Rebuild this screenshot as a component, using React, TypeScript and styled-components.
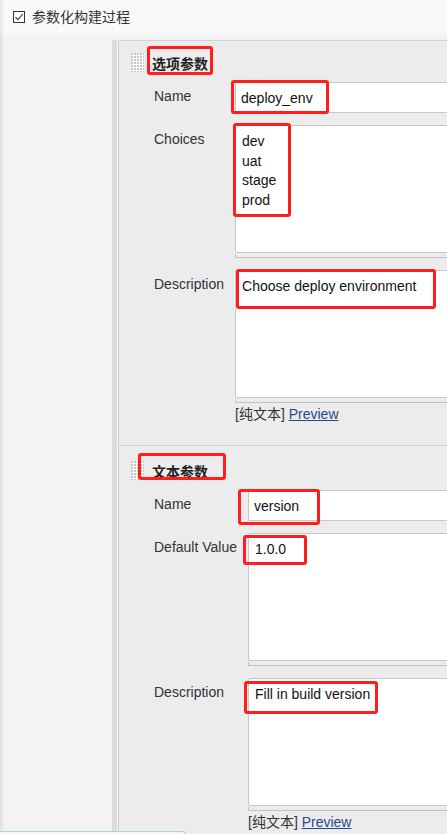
import React from "react";
import styled, { createGlobalStyle } from "styled-components";

const GlobalStyle = createGlobalStyle`
  html, body {
    margin: 0;
    padding: 0;
    overflow: hidden;
    background: #f3f3f3;
    font-family: "Liberation Sans", "Noto Sans CJK SC", Arial, sans-serif;
    font-size: 14px;
    color: #333;
  }
`;

const Page = styled.div`
  width: 447px;
  height: 834px;
  overflow: hidden;
  display: flex;
  flex-direction: column;
`;

const TopBar = styled.div`
  height: 33px;
  flex: none;
  display: flex;
  align-items: center;
  gap: 7px;
  background: #f9f9f9;
  border-left: 3px solid #ececec;
  box-sizing: border-box;
  padding-left: 10px;
`;

const CheckBox = styled.span`
  width: 12px;
  height: 12px;
  box-sizing: border-box;
  border: 1px solid #333;
  background: #fff;
  display: flex;
  align-items: center;
  justify-content: center;
`;

const TopLabel = styled.span`
  font-size: 14px;
  line-height: 16px;
  color: #333;
`;

const Body = styled.div`
  flex: 1;
  display: flex;
  min-height: 0;
`;

const Gutter = styled.div`
  width: 109px;
  flex: none;
  background: #f3f3f3;
  border-left: 3px solid #e4e4e4;
`;

const RightCol = styled.div`
  flex: 1;
  display: flex;
  padding-top: 7px;
  min-width: 0;
`;

const Bar = styled.div`
  width: 5px;
  flex: none;
  background: #dcdcdc;
  margin-right: 1px;
`;

const Panel = styled.div`
  flex: 1;
  background: #ececec;
  border-left: 1px solid #d2d2d2;
  box-shadow: -1px 0 0 #f4f4f4;
  min-width: 0;
`;

const Section = styled.div<{ $top: number; $bottom: number }>`
  position: relative;
  border-top: 1px solid #d2d2d2;
  padding: ${(p) => p.$top}px 0 ${(p) => p.$bottom}px 12px;
`;

const Header = styled.div`
  display: flex;
  align-items: center;
  gap: 8px;
  height: 19px;
`;

const DragHandle = styled.span`
  width: 13px;
  height: 19px;
  background-color: #fff;
  background-image: linear-gradient(90deg, transparent 2px, #fff 2px),
    linear-gradient(#c4c4c4 2px, #fff 2px);
  background-size: 3px 3px;
`;

const HeaderTitle = styled.span`
  font-weight: bold;
  font-size: 14px;
  color: #222;
`;

const FormGrid = styled.div`
  display: grid;
  grid-template-columns: max-content 400px;
  column-gap: 11px;
  row-gap: 12px;
  margin-top: 10px;
  padding-left: 23px;
`;

const Label = styled.div`
  padding-top: 6px;
  line-height: 17px;
  font-size: 14px;
  color: #333;
  white-space: nowrap;
`;

const TextInput = styled.input`
  display: block;
  box-sizing: border-box;
  width: 400px;
  height: 31px;
  border: 1px solid #c8c8c8;
  border-radius: 2px;
  padding: 0 5px;
  margin: 0;
  font-family: "Liberation Sans", Arial, sans-serif;
  font-size: 14px;
  color: #111;
  background: #fff;
  outline: none;
`;

const Field = styled.div`
  display: flex;
  flex-direction: column;
`;

const TextArea = styled.textarea`
  display: block;
  box-sizing: border-box;
  width: 400px;
  height: 128px;
  border: 1px solid #c8c8c8;
  border-radius: 2px;
  padding: 6px 6px;
  margin: 0;
  font-family: "Liberation Sans", Arial, sans-serif;
  font-size: 14px;
  line-height: 19.5px;
  color: #111;
  background: #fff;
  resize: none;
  overflow: hidden;
  outline: none;
`;

const ResizeHandle = styled.div`
  margin-top: 1px;
  height: 3px;
  border-left: 1px solid #c2c2c2;
  border-bottom: 1px solid #c2c2c2;
`;

const PreviewLine = styled.div`
  margin-top: 3px;
  line-height: 16px;
  font-size: 14px;
  color: #333;
  white-space: nowrap;
`;

const PreviewLink = styled.a`
  color: #1f4a8a;
  text-decoration: underline;
`;

const Highlight = styled.span<{ $x: number; $y: number; $w: number; $h: number }>`
  position: absolute;
  left: ${(p) => p.$x}px;
  top: ${(p) => p.$y}px;
  width: ${(p) => p.$w}px;
  height: ${(p) => p.$h}px;
  box-sizing: border-box;
  border: 3px solid #ff1d1d;
  border-radius: 3px;
  pointer-events: none;
`;

const Toast = styled.div`
  position: fixed;
  left: 0;
  bottom: -6px;
  width: 185px;
  height: 8px;
  background: #f2f8f4;
  border-top: 1px solid #a9d9bf;
  border-right: 1px solid #a9d9bf;
  border-top-right-radius: 4px;
`;

type Box = [number, number, number, number];

function Mark({ box }: { box: Box }) {
  const [x, y, w, h] = box;
  return <Highlight $x={x} $y={y} $w={w} $h={h} />;
}

function Preview() {
  return (
    <PreviewLine>
      [纯文本] <PreviewLink href="#">Preview</PreviewLink>
    </PreviewLine>
  );
}

function TextBox({ value, preview }: { value: string; preview?: boolean }) {
  return (
    <Field>
      <TextArea readOnly defaultValue={value} />
      <ResizeHandle />
      {preview && <Preview />}
    </Field>
  );
}

export default function App() {
  return (
    <Page>
      <GlobalStyle />
      <TopBar>
        <CheckBox>
          <svg width="10" height="10" viewBox="0 0 10 10">
            <path d="M1.5 5.2 L4 7.6 L8.8 2" fill="none" stroke="#333" strokeWidth="1.1" />
          </svg>
        </CheckBox>
        <TopLabel>参数化构建过程</TopLabel>
      </TopBar>
      <Body>
        <Gutter />
        <RightCol>
          <Bar />
          <Panel>
            <Section $top={12} $bottom={23}>
              <Header>
                <DragHandle />
                <HeaderTitle>选项参数</HeaderTitle>
              </Header>
              <FormGrid>
                <Label>Name</Label>
                <TextInput readOnly defaultValue="deploy_env" />
                <Label>Choices</Label>
                <TextBox value={"dev\nuat\nstage\nprod"} />
                <Label>Description</Label>
                <TextBox value="Choose deploy environment" preview />
              </FormGrid>
              <Mark box={[28, 5, 66, 29]} />
              <Mark box={[112, 39, 98, 34]} />
              <Mark box={[114, 82, 58, 94]} />
              <Mark box={[117, 228, 200, 40]} />
            </Section>
            <Section $top={15} $bottom={20}>
              <Header>
                <DragHandle />
                <HeaderTitle>文本参数</HeaderTitle>
              </Header>
              <FormGrid>
                <Label>Name</Label>
                <TextInput readOnly defaultValue="version" />
                <Label>Default Value</Label>
                <TextBox value="1.0.0" />
                <Label>Description</Label>
                <TextBox value="Fill in build version" preview />
              </FormGrid>
              <Mark box={[19, 7, 88, 27]} />
              <Mark box={[119, 43, 82, 36]} />
              <Mark box={[124, 89, 64, 30]} />
              <Mark box={[125, 235, 134, 33]} />
            </Section>
          </Panel>
        </RightCol>
      </Body>
      <Toast />
    </Page>
  );
}
